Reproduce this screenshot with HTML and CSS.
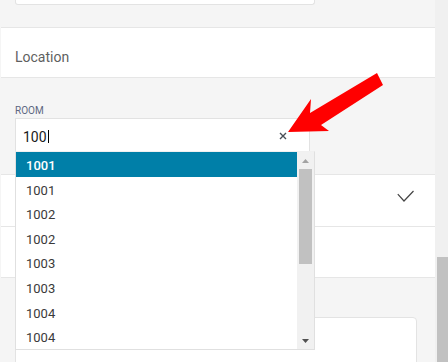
FILE: index.html
```html
<!DOCTYPE html>
<html>
<head>
<meta charset="utf-8">
<link rel="stylesheet" href="styles.css">
</head>
<body>
<div class="app">
  <main class="page">
    <div class="top-card"></div>
    <section class="band location-band"><span class="band-title">Location</span></section>
    <div class="field-area">
      <div class="field-label">ROOM</div>
      <div class="input">
        <span class="input-text">100</span><span class="caret"></span>
        <svg class="clear" width="8" height="8" viewBox="0 0 8 8"><path d="M1 1L7 7M7 1L1 7" stroke="#4a4f57" stroke-width="1.4" fill="none"/></svg>
      </div>
    </div>
    <section class="band check-band">
      <svg class="check" width="18" height="13" viewBox="0 0 18 13"><path d="M0.8 4.2L7 11L16.5 1" stroke="#444" stroke-width="1.2" fill="none"/></svg>
    </section>
    <section class="band empty-band"></section>
    <div class="bottom-card"></div>

    <div class="dropdown">
      <ul class="options">
        <li class="option selected">1001</li>
        <li class="option">1001</li>
        <li class="option">1002</li>
        <li class="option">1002</li>
        <li class="option">1003</li>
        <li class="option">1003</li>
        <li class="option">1004</li>
        <li class="option">1004</li>
      </ul>
      <div class="list-scroll">
        <div class="scroll-btn"><svg width="7" height="4" viewBox="0 0 7 4"><polygon points="3.5,0 7,4 0,4" fill="#a3a3a3"/></svg></div>
        <div class="list-thumb"></div>
        <div class="scroll-fill"></div>
        <div class="scroll-btn"><svg width="7" height="4" viewBox="0 0 7 4"><polygon points="0,0 7,0 3.5,4" fill="#505050"/></svg></div>
      </div>
    </div>
  </main>
  <div class="page-scroll"><div class="page-thumb"></div></div>
</div>
<svg class="arrow" width="448" height="362" viewBox="0 0 448 362"><polygon points="288,132 311,99 310,113 377,73 383,85 321,125 329,131" fill="#ff0000"/></svg>
</body>
</html>
```
FILE: styles.css
```css
* { box-sizing: border-box; }
html, body { margin: 0; padding: 0; }
body {
  width: 448px;
  height: 362px;
  overflow: hidden;
  background: #f5f5f5;
  font-family: Roboto, "Liberation Sans", sans-serif;
  position: relative;
}
.app {
  display: flex;
  height: 362px;
  overflow: hidden;
}
.page {
  position: relative;
  width: 435px;
  flex: none;
  padding-left: 1px;
  background: #f5f5f5;
}
.top-card {
  margin-left: 14px;
  width: 300px;
  height: 5px;
  background: #fff;
  border: 1px solid #e3e3e3;
  border-top: none;
  border-radius: 0 0 3px 3px;
}
.band {
  background: #fff;
  border-top: 1px solid #e6e6e6;
}
.location-band {
  margin-top: 22px;
  height: 51px;
  border-bottom: 1px solid #e6e6e6;
  padding: 21px 14px 0;
}
.band-title {
  display: block;
  font-size: 14px;
  line-height: 16px;
  color: #5f5f5f;
}
.field-area {
  height: 96px;
  padding: 27px 0 0 14px;
}
.field-label {
  font-size: 10px;
  line-height: 12px;
  color: #5d6781;
  margin-bottom: 1px;
}
.input {
  width: 295px;
  height: 34px;
  background: #fff;
  border: 1px solid #e2e2e2;
  display: flex;
  align-items: center;
  padding: 4px 0 0 7px;
}
.input-text {
  font-size: 14px;
  line-height: 16px;
  color: #1a1a1a;
}
.caret {
  width: 1px;
  height: 13px;
  background: #000;
  margin-left: 1px;
  margin-bottom: 2px;
}
.clear {
  margin-left: auto;
  margin-right: 22px;
  margin-bottom: 2px;
}
.check-band {
  height: 52px;
  display: flex;
  justify-content: flex-end;
  align-items: flex-start;
  padding: 15px 20px 0 0;
}
.empty-band {
  height: 52px;
  border-bottom: 1px solid #e6e6e6;
}
.bottom-card {
  margin: 39px 0 0 14px;
  width: 402px;
  height: 60px;
  background: #fff;
  border: 1px solid #e3e3e3;
  border-radius: 4px;
}
.dropdown {
  position: absolute;
  top: 151px;
  left: 15px;
  width: 300px;
  height: 199px;
  background: #fff;
  border: 1px solid #e0e0e0;
  border-top-color: #f0f0f0;
  display: flex;
}
.options {
  list-style: none;
  margin: 0;
  padding: 0;
  flex: 1;
}
.option {
  height: 24.6px;
  padding: 4px 0 0 10px;
  font-size: 13px;
  line-height: 20.6px;
  color: #3a3a3a;
}
.option.selected {
  background: #007fa8;
  color: #fff;
  font-weight: 500;
}
.list-scroll {
  width: 17px;
  flex: none;
  background: #f1f1f1;
  display: flex;
  flex-direction: column;
  align-items: center;
}
.scroll-btn {
  height: 17px;
  width: 17px;
  display: flex;
  align-items: center;
  justify-content: center;
}
.scroll-btn svg { display: block; }
.list-thumb {
  width: 13px;
  height: 95px;
  background: #c1c1c1;
}
.scroll-fill { flex: 1; }
.page-scroll {
  width: 13px;
  flex: none;
  background: #f0f0f0;
  padding-top: 257px;
  padding-left: 2px;
}
.page-thumb {
  height: 105px;
  background: #c1c1c1;
}
.arrow {
  position: absolute;
  top: 0;
  left: 0;
  pointer-events: none;
}
```
